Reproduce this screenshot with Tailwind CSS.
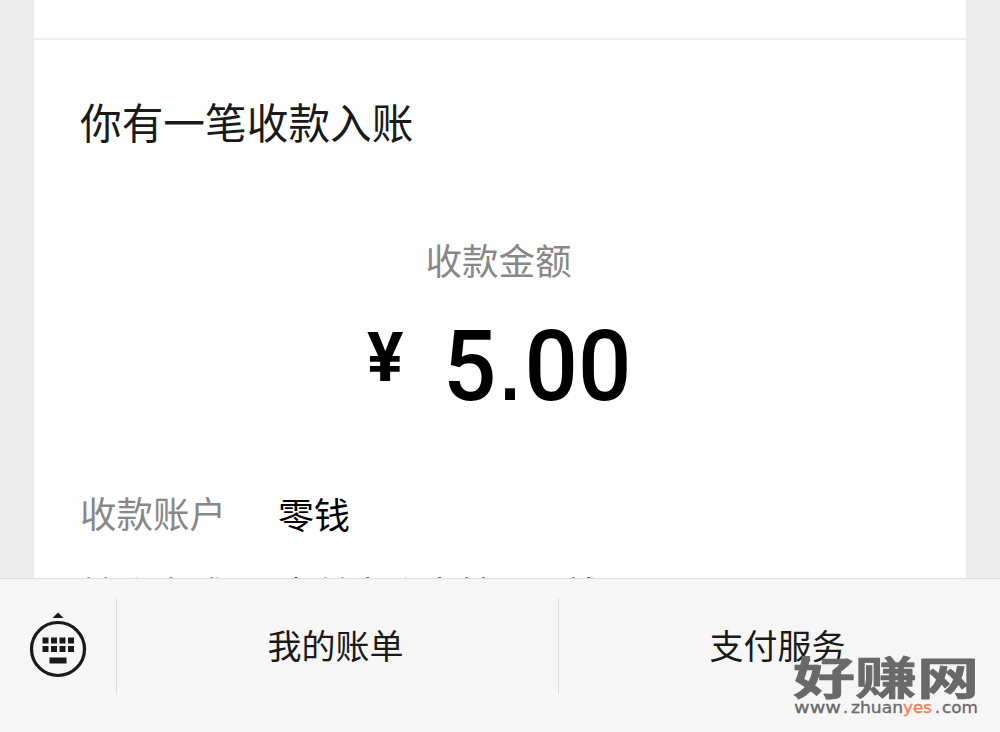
<!DOCTYPE html>
<html lang="zh-CN">
<head>
    <meta charset="UTF-8">
    <meta name="viewport" content="width=device-width, initial-scale=1.0">
    <title>收款入账</title>
    <script src="https://cdn.jsdelivr.net/npm/@tailwindcss/browser@4"></script>
</head>
<body class="bg-[#ececec] font-['Noto_Sans_CJK_SC',sans-serif]">
    <div class="relative flex h-[732px] w-[1000px] flex-col overflow-hidden">
        <!-- Message card -->
        <main class="mx-[34px] h-[578px] shrink-0 overflow-hidden bg-[#fefefe] text-[36px] leading-[54px]">
            <div class="h-10 border-b-2 border-[#efefef]"></div>
            <h1 class="mt-[51px] ml-[46px] h-[60px] text-[41.7px] leading-[60px] text-[#1a1a1a]">你有一笔收款入账</h1>
            <p class="mt-[82px] h-[54px] pr-[3px] text-center text-[36.5px] text-[#888]">收款金额</p>
            <div class="mt-[29px] flex h-[100px] items-start justify-start pl-[333px] font-[Roboto,sans-serif] text-black">
                <span class="w-[76px] pt-[12px] text-[68px] leading-[60px] font-bold">¥</span>
                <span class="origin-left scale-x-95 text-[99px] leading-[100px] font-medium">5<span class="-ml-[1px] font-['Liberation_Sans',sans-serif] text-[110px] leading-[60px]">.</span>00</span>
            </div>
            <dl class="mt-[70px] ml-[46px] grid grid-cols-[198px_1fr] gap-y-[25px]">
                <dt class="text-[36.5px] text-[#888]">收款账户</dt>
                <dd class="text-black">零钱</dd>
                <dt class="pt-px text-[36.5px] text-[#888]">转账方式</dt>
                <dd class="text-black/70">支付方账户转入零钱</dd>
            </dl>
        </main>

        <!-- Bottom menu -->
        <nav class="flex h-[154px] shrink-0 border-t border-[#dedede] bg-[#f6f6f6] pt-[19px] text-[34px] text-[#1a1a1a]">
            <button class="flex h-24 w-[116px] items-start justify-center pt-[13px]">
                <svg class="h-[68px] w-[60px]" viewBox="0 0 60 68" fill="#1a1a1a">
                    <path d="M24.5 7 30 1.500l5.500 5.500z"/>
                    <circle cx="30" cy="38" r="26.500" fill="none" stroke="#1a1a1a" stroke-width="3.200"/>
                    <path d="M14.500 26.500h6v6h-6zM23 26.500h6v6h-6zM31.500 26.500h6v6h-6zM40 26.500h6v6h-6zM14.500 35h6v6h-6zM23 35h6v6h-6zM31.500 35h6v6h-6zM40 35h6v6h-6zM21.500 46.500h17v6h-17z"/>
                </svg>
            </button>
            <button class="h-24 w-[442px] border-l border-[#dedede] pr-[4px] pb-[4px]">我的账单</button>
            <button class="h-24 w-[442px] border-l border-[#dedede] pr-[4px] pb-[4px]">支付服务</button>
        </nav>

        <!-- Watermark -->
        <svg class="absolute top-[650px] left-[790px] h-[70px] w-[192px]" viewBox="0 0 192 70" fill="#696969">
            <text class="font-['Noto_Sans_CJK_SC',sans-serif] text-[62px] font-bold" transform="translate(3 44.500) scale(1 .73)" textLength="186" stroke="#696969" stroke-width="1" stroke-linejoin="round">好赚网</text>
            <g class="font-['DejaVu_Sans',sans-serif] text-[15.5px]" stroke="#696969" stroke-width=".3">
                <text x="4" y="63" textLength="47" lengthAdjust="spacingAndGlyphs">www</text>
                <text x="53" y="63">.</text>
                <text x="61" y="63" textLength="52" lengthAdjust="spacingAndGlyphs">zhuan</text>
                <text x="113" y="63" textLength="29" lengthAdjust="spacingAndGlyphs" fill="#ff7a4d" stroke="#ff7a4d">yes</text>
                <text x="145" y="63">.</text>
                <text x="152" y="63" textLength="36" lengthAdjust="spacingAndGlyphs">com</text>
            </g>
        </svg>
    </div>
</body>
</html>
